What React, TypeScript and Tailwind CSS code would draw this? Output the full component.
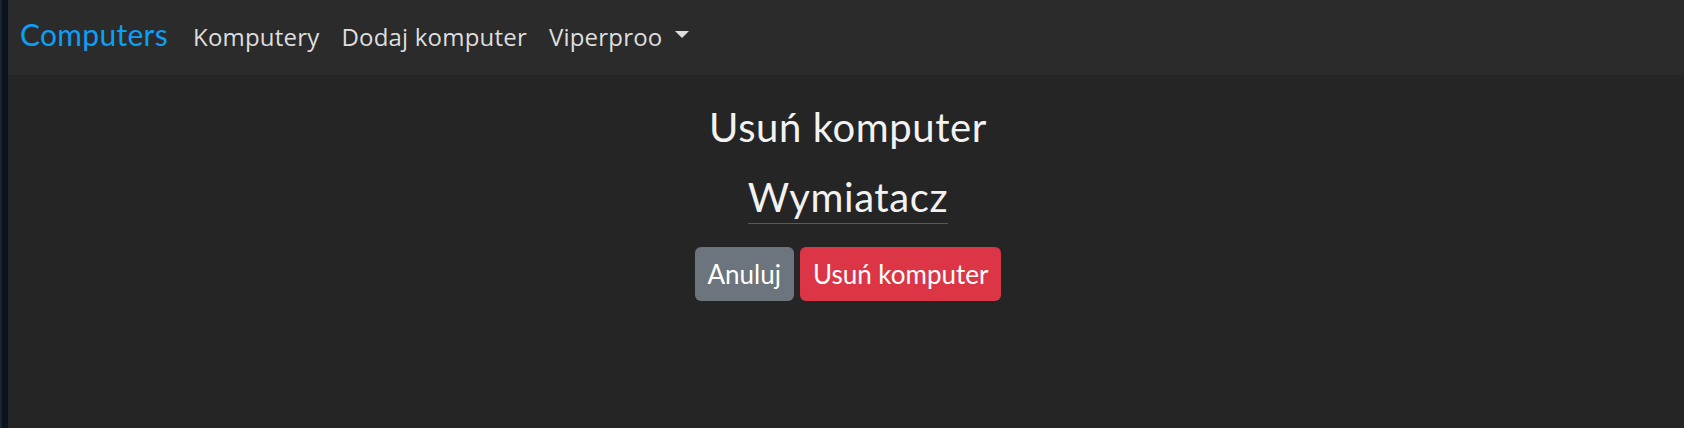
import * as React from "react";

const heading = "font-['Lato','Open_Sans',sans-serif]";
const navFont = "font-['Open_Sans','Noto_Sans',sans-serif]";

function Navbar() {
  return (
    <nav className={`h-[75px] bg-[#2b2b2b] flex items-baseline pt-[19px] pl-[12px] ${navFont}`}>
      <a className={`text-[30px] leading-none tracking-[0.3px] text-[#0d9ef5] ${heading}`}>Computers</a>
      <ul className="flex items-baseline ml-[25px] gap-[22px] text-[24px] leading-none tracking-[0.2px] text-[#dedede]">
        <li>Komputery</li>
        <li>Dodaj komputer</li>
        <li>
          Viperproo
          <span className="inline-block ml-[13px] align-[8px] w-0 h-0 border-t-[7px] border-x-[7px] border-x-transparent border-t-[#dedede]" />
        </li>
      </ul>
    </nav>
  );
}

export default function App() {
  return (
    <div className="min-h-screen flex bg-[#252525]">
      <div className="w-[2px] bg-[#1c242c]" />
      <div className="w-[6px] bg-[#0a141e]" />
      <div className="flex-1 flex flex-col">
        <Navbar />
        <main className={`flex flex-col items-center pl-[4px] text-[#f2f2f2] ${heading}`}>
          <h3 className="mt-[28px] text-[40px] leading-[1.2] tracking-[0.6px]">Usuń komputer</h3>
          <div className="mt-[22px] text-[40px] leading-[1.2] tracking-[0.6px] pb-[2px] border-b border-[#5a5a5a]">
            Wymiatacz
          </div>
          <div className="mt-[23px] flex gap-[6px]">
            <button className="h-[54px] px-[13px] rounded-[6px] bg-[#6c757d] text-white text-[26px]">Anuluj</button>
            <button className="h-[54px] px-[13px] rounded-[6px] bg-[#dc3545] text-white text-[26px]">Usuń komputer</button>
          </div>
        </main>
      </div>
    </div>
  );
}
